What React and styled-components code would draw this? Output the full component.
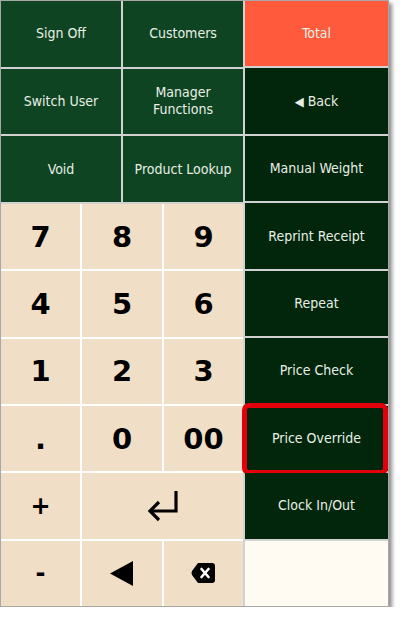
import React from 'react';
import styled, {createGlobalStyle} from 'styled-components';

const GlobalStyle = createGlobalStyle`
  html, body {
    margin: 0;
    padding: 0;
    background: #ffffff;
  }
  body {
    font-family: "DejaVu Sans Condensed", "Liberation Sans", sans-serif;
  }
`

const Frame = styled.div`
  width: 387px;
  height: 605px;
  border: 1px solid #a8a8a8;
  box-shadow: 3px 3px 4px rgba(0, 0, 0, 0.45);
  display: grid;
  grid-template-columns: 242px 143px;
  gap: 2px;
  background: #d2d2d2;
`

const LeftPanel = styled.div`
  display: grid;
  grid-template-rows: 3fr 6fr;
  row-gap: 2px;
`

const TopGrid = styled.div`
  display: grid;
  grid-template-columns: 120px 120px;
  grid-template-rows: repeat(3, 1fr);
  gap: 2px;
`

const Pad = styled.div`
  display: grid;
  grid-template-columns: 79px 80px 79px;
  grid-template-rows: repeat(6, 1fr);
  gap: 2px;
  background: #ffffff;
`

const RightColumn = styled.div`
  display: grid;
  grid-template-rows: repeat(9, 1fr);
  gap: 2px;
`

const FuncButton = styled.div`
  position: relative;
  display: flex;
  align-items: center;
  justify-content: center;
  text-align: center;
  line-height: 17px;
  font-size: 14px;
  color: #e8efe6;
  background: ${p => p.$tone === 'total' ? '#ff5a3c' : p.$tone === 'dark' ? '#02260c' : p.$tone === 'empty' ? '#fffaf2' : '#0f4423'};
  padding: 0 4px;
`

const Key = styled.div`
  display: flex;
  align-items: center;
  justify-content: center;
  background: #f0dfc6;
  color: #000;
  font-family: "DejaVu Sans", "Liberation Sans", sans-serif;
  font-weight: bold;
  font-size: ${p => p.$small ? '24px' : '29px'};
  grid-column: ${p => p.$span ? 'span 2' : 'auto'};
`

const Highlight = styled.div`
  position: absolute;
  top: -3px;
  bottom: -4px;
  left: -3px;
  right: 0;
  border: 5px solid #e3000a;
  border-radius: 7px;
  pointer-events: none;
`

const BackArrow = styled.span`
  font-size: 13px;
  margin-right: 4px;
`

const EnterIcon = () => (
  <svg width="34" height="34" viewBox="0 0 34 34">
    <path d="M30 2 V22 H5" fill="none" stroke="#000" strokeWidth="3.2" />
    <path d="M13 13 L4 22 L13 31" fill="none" stroke="#000" strokeWidth="3.2" />
  </svg>
)

const LeftTriangle = () => (
  <svg width="24" height="25" viewBox="0 0 24 25">
    <path d="M0 12.5 L23 0 V25 Z" fill="#000" />
  </svg>
)

const BackspaceIcon = () => (
  <svg width="25" height="22" viewBox="0 0 25 22">
    <path d="M7 1 H21 Q24 1 24 4 V18 Q24 21 21 21 H7 L1 13 Q0 11 1 9 Z" fill="#000" />
    <path d="M10.5 7 L17.5 15 M17.5 7 L10.5 15" stroke="#fff" strokeWidth="2.6" strokeLinecap="round" />
  </svg>
)

const topButtons = ['Sign Off', 'Customers', 'Switch User', 'Manager Functions', 'Void', 'Product Lookup']

export default function App() {
  return (
    <>
      <GlobalStyle/>
      <Frame>
        <LeftPanel>
          <TopGrid>
            {topButtons.map(label => (
              <FuncButton key={label}>
                {label === 'Manager Functions' ? <span>Manager<br/>Functions</span> : label}
              </FuncButton>
            ))}
          </TopGrid>
          <Pad>
            <Key>7</Key>
            <Key>8</Key>
            <Key>9</Key>
            <Key>4</Key>
            <Key>5</Key>
            <Key>6</Key>
            <Key>1</Key>
            <Key>2</Key>
            <Key>3</Key>
            <Key>.</Key>
            <Key>0</Key>
            <Key>00</Key>
            <Key $small>+</Key>
            <Key $span><EnterIcon/></Key>
            <Key $small>-</Key>
            <Key><LeftTriangle/></Key>
            <Key><BackspaceIcon/></Key>
          </Pad>
        </LeftPanel>
        <RightColumn>
          <FuncButton $tone="total">Total</FuncButton>
          <FuncButton $tone="dark"><BackArrow>◀</BackArrow>Back</FuncButton>
          <FuncButton $tone="dark">Manual Weight</FuncButton>
          <FuncButton $tone="dark">Reprint Receipt</FuncButton>
          <FuncButton $tone="dark">Repeat</FuncButton>
          <FuncButton $tone="dark">Price Check</FuncButton>
          <FuncButton $tone="dark">
            Price Override
            <Highlight/>
          </FuncButton>
          <FuncButton $tone="dark">Clock In/Out</FuncButton>
          <FuncButton $tone="empty"/>
        </RightColumn>
      </Frame>
    </>
  );
}
